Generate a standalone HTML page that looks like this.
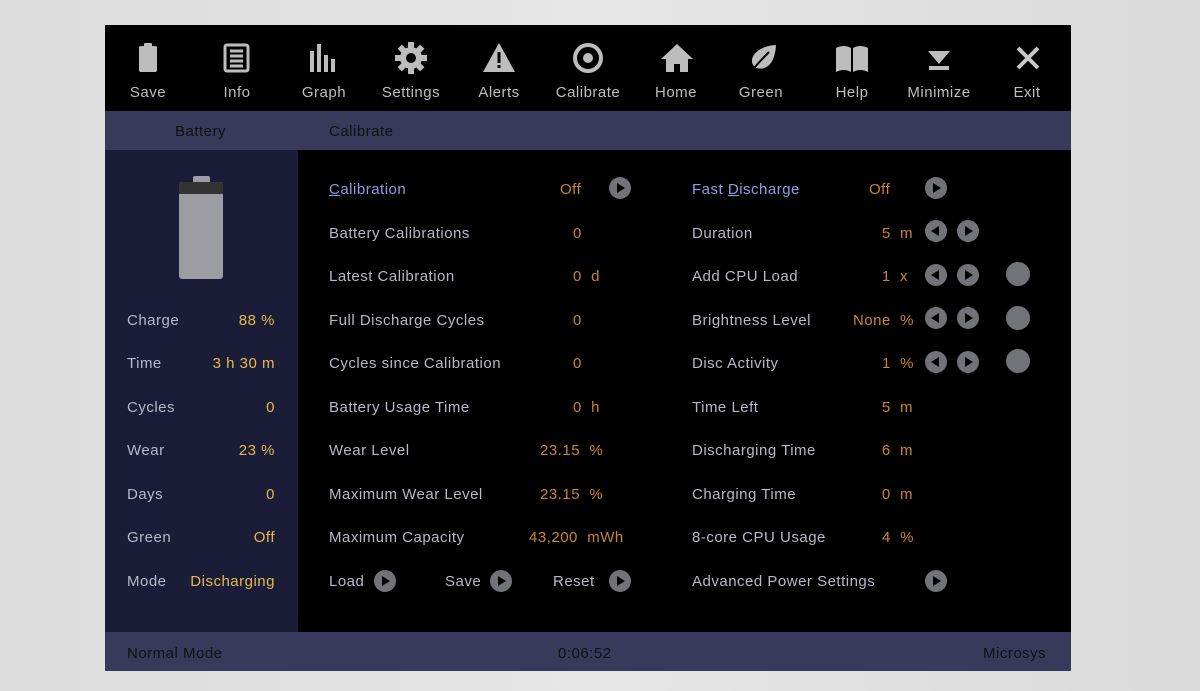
<!DOCTYPE html><html><head><meta charset="utf-8"><style>
*{margin:0;padding:0;box-sizing:border-box}
body{width:1200px;height:691px;background:linear-gradient(90deg,#dcdcdc,#e6e6e6 50%,#dadada);font-family:"Liberation Sans",sans-serif;font-size:15px;letter-spacing:0.5px;position:relative;overflow:hidden}
.a{position:absolute}
.t{position:absolute;line-height:18px;white-space:nowrap;color:#b6b9c8;margin-top:2px}
.y{color:#e2bb4c}.o{color:#c9852f}
.r{text-align:right}
.btn{position:absolute;width:22px;height:22px;border-radius:50%;background:#727378}
.btn:after{content:"";position:absolute;top:6px;left:8px;border-left:8px solid #000;border-top:5px solid transparent;border-bottom:5px solid transparent}
.btn.l:after{left:6px;border-left:0;border-right:8px solid #000}
.dot{position:absolute;width:24px;height:24px;border-radius:50%;background:#727378}
.tb{position:absolute;top:84px;width:100px;text-align:center;color:#bdbdbd;line-height:18px}
svg.i{position:absolute;top:42px}
</style></head><body>
<div class="a" style="left:105px;top:25px;width:966px;height:86px;background:#000"></div>
<div class="a" style="left:105px;top:111px;width:966px;height:39px;background:#393a5b"></div>
<div class="a" style="left:105px;top:150px;width:193px;height:482px;background:#1b1c38"></div>
<div class="a" style="left:298px;top:150px;width:773px;height:482px;background:#000"></div>
<div class="a" style="left:105px;top:632px;width:966px;height:39px;background:#393a5b"></div>

<svg class="i" style="left:136px" width="24" height="32" fill="#bdbdbd"><rect x="8" y="1" width="8" height="4" rx="1"/><rect x="3" y="4" width="18" height="26" rx="2"/></svg>
<svg class="i" style="left:222px" width="30" height="32" fill="none" stroke="#bdbdbd"><rect x="3" y="3" width="23" height="26" rx="2" stroke-width="3"/><path d="M8 9h13M8 14h13M8 19h13M8 24h13" stroke-width="3"/></svg>
<svg class="i" style="left:309px" width="32" height="32" fill="#bdbdbd"><rect x="1" y="9" width="4" height="21"/><rect x="8" y="2" width="4" height="28"/><rect x="15" y="13" width="4" height="17"/><rect x="22" y="17" width="4" height="13"/></svg>
<svg class="i" style="left:395px" width="32" height="32" viewBox="0 0 32 32"><g fill="#bdbdbd" transform="translate(16 16)"><circle r="11"/><g id="g"><rect x="-3" y="-16" width="6" height="7"/></g><use href="#g" transform="rotate(45)"/><use href="#g" transform="rotate(90)"/><use href="#g" transform="rotate(135)"/><use href="#g" transform="rotate(180)"/><use href="#g" transform="rotate(225)"/><use href="#g" transform="rotate(270)"/><use href="#g" transform="rotate(315)"/></g><circle cx="16" cy="16" r="5" fill="#000"/></svg>
<svg class="i" style="left:482px" width="34" height="32"><path d="M17 1L33 30H1Z" fill="#bdbdbd"/><rect x="15.5" y="10" width="3" height="11" fill="#000"/><rect x="15.5" y="23" width="3" height="3" fill="#000"/></svg>
<svg class="i" style="left:572px" width="32" height="32"><circle cx="16" cy="16" r="13" fill="none" stroke="#bdbdbd" stroke-width="4"/><circle cx="16" cy="16" r="5" fill="#bdbdbd"/></svg>
<svg class="i" style="left:660px" width="34" height="32" fill="#bdbdbd"><path d="M17 2L33 17H28V30H20V22H14V30H6V17H1Z"/></svg>
<svg class="i" style="left:746px" width="32" height="32"><path d="M3 31C6 27 8 27 10 26C0 19 9 4 30 3C29 20 22 29 10 26" fill="#bdbdbd"/><path d="M4 31C11 22 17 16 23 10" stroke="#000" stroke-width="2" fill="none"/></svg>
<svg class="i" style="left:835px" width="34" height="32" fill="#bdbdbd"><path d="M1 6Q9 2 16 6V30Q9 26 1 30Z"/><path d="M18 6Q25 2 33 6V30Q25 26 18 30Z"/></svg>
<svg class="i" style="left:924px" width="30" height="32" fill="#bdbdbd"><path d="M4 9H26L15 22Z"/><rect x="5" y="24" width="20" height="4"/></svg>
<svg class="i" style="left:1013px" width="30" height="32"><path d="M5 6L25 26M25 6L5 26" stroke="#c8c8c8" stroke-width="4"/></svg>

<div class="tb" style="left:98px">Save</div>
<div class="tb" style="left:187px">Info</div>
<div class="tb" style="left:274px">Graph</div>
<div class="tb" style="left:361px">Settings</div>
<div class="tb" style="left:449px">Alerts</div>
<div class="tb" style="left:538px">Calibrate</div>
<div class="tb" style="left:626px">Home</div>
<div class="tb" style="left:711px">Green</div>
<div class="tb" style="left:802px">Help</div>
<div class="tb" style="left:889px">Minimize</div>
<div class="tb" style="left:977px">Exit</div>

<div class="t" style="left:175px;top:121px;color:#111">Battery</div>
<div class="t" style="left:329px;top:121px;color:#111">Calibrate</div>

<div class="a" style="left:193px;top:176px;width:17px;height:8px;background:#9c9da2;border-radius:2px"></div>
<div class="a" style="left:179px;top:182px;width:44px;height:97px;background:#9c9da2;border-radius:3px;overflow:hidden"><div style="height:12px;background:#333"></div></div>

<div class="t" style="left:127px;top:310px">Charge</div><div class="t y r" style="right:925px;top:310px">88 %</div>
<div class="t" style="left:127px;top:353px">Time</div><div class="t y r" style="right:925px;top:353px">3 h 30 m</div>
<div class="t" style="left:127px;top:397px">Cycles</div><div class="t y r" style="right:925px;top:397px">0</div>
<div class="t" style="left:127px;top:440px">Wear</div><div class="t y r" style="right:925px;top:440px">23 %</div>
<div class="t" style="left:127px;top:484px">Days</div><div class="t y r" style="right:925px;top:484px">0</div>
<div class="t" style="left:127px;top:527px">Green</div><div class="t y r" style="right:925px;top:527px">Off</div>
<div class="t" style="left:127px;top:571px">Mode</div><div class="t y r" style="right:925px;top:571px">Discharging</div>

<div class="t" style="left:329px;top:179px;color:#8d9ee6"><u>C</u>alibration</div><div class="t o" style="left:560px;top:179px">Off</div><div class="btn" style="left:609px;top:177px"></div>
<div class="t" style="left:329px;top:223px">Battery Calibrations</div><div class="t o" style="left:573px;top:223px">0</div>
<div class="t" style="left:329px;top:266px">Latest Calibration</div><div class="t o" style="left:573px;top:266px">0&nbsp; d</div>
<div class="t" style="left:329px;top:310px">Full Discharge Cycles</div><div class="t o" style="left:573px;top:310px">0</div>
<div class="t" style="left:329px;top:353px">Cycles since Calibration</div><div class="t o" style="left:573px;top:353px">0</div>
<div class="t" style="left:329px;top:397px">Battery Usage Time</div><div class="t o" style="left:573px;top:397px">0&nbsp; h</div>
<div class="t" style="left:329px;top:440px">Wear Level</div><div class="t o" style="left:540px;top:440px">23.15&nbsp; %</div>
<div class="t" style="left:329px;top:484px">Maximum Wear Level</div><div class="t o" style="left:540px;top:484px">23.15&nbsp; %</div>
<div class="t" style="left:329px;top:527px">Maximum Capacity</div><div class="t o" style="left:529px;top:527px">43,200&nbsp; mWh</div>
<div class="t" style="left:329px;top:571px">Load</div><div class="btn" style="left:374px;top:570px"></div>
<div class="t" style="left:445px;top:571px">Save</div><div class="btn" style="left:490px;top:570px"></div>
<div class="t" style="left:553px;top:571px">Reset</div><div class="btn" style="left:609px;top:570px"></div>

<div class="t" style="left:692px;top:179px;color:#8d9ee6">Fast <u>D</u>ischarge</div><div class="t o" style="left:869px;top:179px">Off</div><div class="btn" style="left:925px;top:177px"></div>
<div class="t" style="left:692px;top:223px">Duration</div><div class="t o r" style="right:287px;top:223px">5&nbsp; m</div><div class="btn l" style="left:925px;top:220px"></div><div class="btn" style="left:957px;top:220px"></div>
<div class="t" style="left:692px;top:266px">Add CPU Load</div><div class="t o r" style="right:292px;top:266px">1&nbsp; x</div><div class="btn l" style="left:925px;top:264px"></div><div class="btn" style="left:957px;top:264px"></div><div class="dot" style="left:1006px;top:262px"></div>
<div class="t" style="left:692px;top:310px">Brightness Level</div><div class="t o r" style="right:286px;top:310px">None&nbsp; %</div><div class="btn l" style="left:925px;top:307px"></div><div class="btn" style="left:957px;top:307px"></div><div class="dot" style="left:1006px;top:306px"></div>
<div class="t" style="left:692px;top:353px">Disc Activity</div><div class="t o r" style="right:286px;top:353px">1&nbsp; %</div><div class="btn l" style="left:925px;top:351px"></div><div class="btn" style="left:957px;top:351px"></div><div class="dot" style="left:1006px;top:349px"></div>
<div class="t" style="left:692px;top:397px">Time Left</div><div class="t o r" style="right:287px;top:397px">5&nbsp; m</div>
<div class="t" style="left:692px;top:440px">Discharging Time</div><div class="t o r" style="right:287px;top:440px">6&nbsp; m</div>
<div class="t" style="left:692px;top:484px">Charging Time</div><div class="t o r" style="right:287px;top:484px">0&nbsp; m</div>
<div class="t" style="left:692px;top:527px">8-core CPU Usage</div><div class="t o r" style="right:286px;top:527px">4&nbsp; %</div>
<div class="t" style="left:692px;top:571px">Advanced Power Settings</div><div class="btn" style="left:925px;top:570px"></div>

<div class="t" style="left:127px;top:643px;color:#111">Normal Mode</div>
<div class="t" style="left:558px;top:643px;color:#111">0:06:52</div>
<div class="t" style="left:983px;top:643px;color:#111">Microsys</div>
</body></html>
